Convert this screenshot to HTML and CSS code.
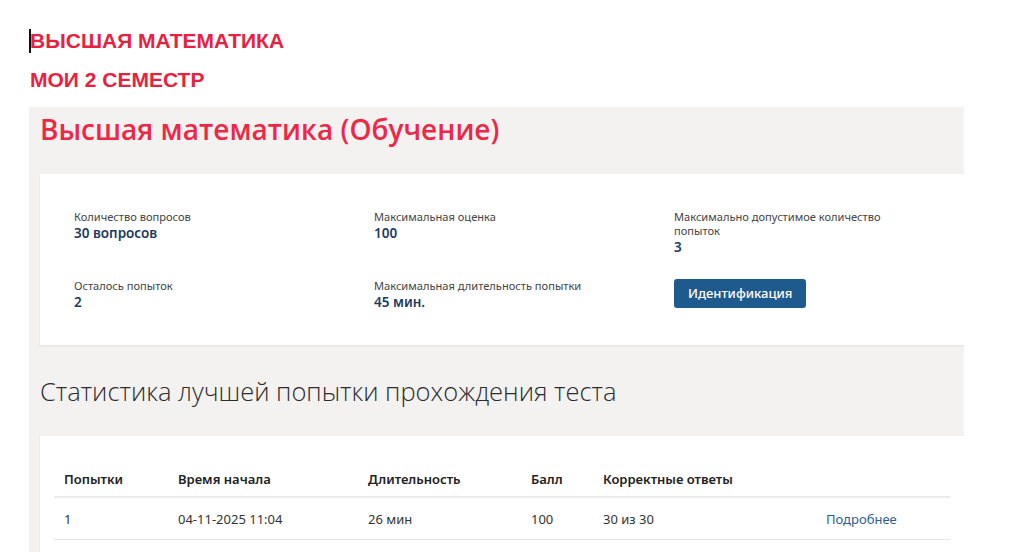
FILE: index.html
```html
<!DOCTYPE html>
<html lang="ru">
<head>
    <meta charset="UTF-8">
    <meta name="viewport" content="width=device-width, initial-scale=1.0">
    <title>Высшая математика</title>
    <link rel="stylesheet" href="styles.css">
</head>
<body>
    <div class="page">
        <h2 class="course-head"><span class="caret"></span>ВЫСШАЯ МАТЕМАТИКА</h2>
        <h2 class="course-head">МОИ 2 СЕМЕСТР</h2>

        <div class="panel">
            <h1 class="test-title">Высшая математика (Обучение)</h1>

            <div class="card info-card">
                <div class="info-grid">
                    <div class="info-item">
                        <div class="info-label">Количество вопросов</div>
                        <div class="info-value">30 вопросов</div>
                    </div>
                    <div class="info-item">
                        <div class="info-label">Максимальная оценка</div>
                        <div class="info-value">100</div>
                    </div>
                    <div class="info-item">
                        <div class="info-label">Максимально допустимое количество попыток</div>
                        <div class="info-value">3</div>
                    </div>
                    <div class="info-item">
                        <div class="info-label">Осталось попыток</div>
                        <div class="info-value">2</div>
                    </div>
                    <div class="info-item">
                        <div class="info-label">Максимальная длительность попытки</div>
                        <div class="info-value">45 мин.</div>
                    </div>
                    <div class="info-item">
                        <button class="ident-button">Идентификация</button>
                    </div>
                </div>
            </div>

            <h2 class="stats-title">Статистика лучшей попытки прохождения теста</h2>

            <div class="card stats-card">
                <table class="stats-table">
                    <thead>
                        <tr>
                            <th class="col-try">Попытки</th>
                            <th class="col-start">Время начала</th>
                            <th class="col-len">Длительность</th>
                            <th class="col-score">Балл</th>
                            <th class="col-correct">Корректные ответы</th>
                            <th class="col-more"></th>
                        </tr>
                    </thead>
                    <tbody>
                        <tr>
                            <td>1</td>
                            <td>04-11-2025 11:04</td>
                            <td>26 мин</td>
                            <td>100</td>
                            <td>30 из 30</td>
                            <td><a class="more-link" href="#">Подробнее</a></td>
                        </tr>
                    </tbody>
                </table>
            </div>
        </div>
    </div>
</body>
</html>
```

FILE: styles.css
```css
body {
    margin: 0;
    background-color: #ffffff;
    font-family: "Noto Sans", "Open Sans", sans-serif;
    color: #333333;
}
.page {
    padding: 29px 0 0 29px;
    width: 935px;
}
.course-head {
    margin: 0 0 15px 1px;
    font-family: "Liberation Sans", Arial, sans-serif;
    font-size: 21px;
    font-weight: bold;
    line-height: 24px;
    color: #e8213f; /* red headings */
    position: relative;
}
.caret {
    position: absolute;
    left: -1px;
    top: 0;
    width: 2px;
    height: 24px;
    background-color: #111;
}
.panel {
    margin-top: 0;
    background-color: #f3f2f1; /* light gray */
    padding: 3px 0 0 11px;
    height: 450px;
    overflow: hidden;
}
.test-title {
    margin: 0;
    font-family: "Open Sans", sans-serif;
    font-size: 28px;
    font-weight: 600;
    line-height: 38px;
    color: #ee2747;
}
.card {
    background-color: #ffffff;
    box-shadow: 0 1px 2px rgba(0, 0, 0, 0.08);
}
.info-card {
    margin-top: 26px;
    padding: 36px 0 34px 34px;
    width: 900px;
}
.info-grid {
    display: grid;
    grid-template-columns: 300px 300px 215px;
    row-gap: 23px;
}
.info-label {
    font-size: 11.1px;
    line-height: 14px;
    color: #444444;
}
.info-value {
    margin-top: 1px;
    font-size: 13.5px;
    font-weight: 600;
    line-height: 17px;
    color: #1c3a5e; /* navy values */
}
.ident-button {
    display: block;
    border: none;
    border-radius: 3px;
    background-color: #1f5a8f;
    color: white;
    font-family: "Noto Sans", "Open Sans", sans-serif;
    font-size: 13px;
    font-weight: 500;
    padding: 5px 14px 6px;
    height: 29px;
    cursor: pointer;
}
.stats-title {
    margin: 30px 0 29px 0;
    font-family: "Open Sans", sans-serif;
    font-size: 25.5px;
    font-weight: 300;
    line-height: 32px;
    color: #2d2d2d;
}
.stats-card {
    padding: 26px 0 0 14px;
    width: 910px;
    height: 120px;
}
.stats-table {
    width: 896px;
    border-collapse: collapse;
    font-size: 13px;
    table-layout: fixed;
}
.stats-table th,
.stats-table td {
    text-align: left;
    padding: 0 10px;
}
.stats-table th {
    height: 34px;
    font-weight: 600;
    color: #222;
    border-bottom: 2px solid #ececec;
}
.stats-table td {
    height: 41px;
    color: #333;
    border-bottom: 1px solid #e6e6e6;
}
.col-try { width: 94px; }
.col-start { width: 170px; }
.col-len { width: 143px; }
.col-score { width: 52px; }
.col-correct { width: 203px; }
.more-link {
    color: #2a5d94;
    text-decoration: none;
}
```
